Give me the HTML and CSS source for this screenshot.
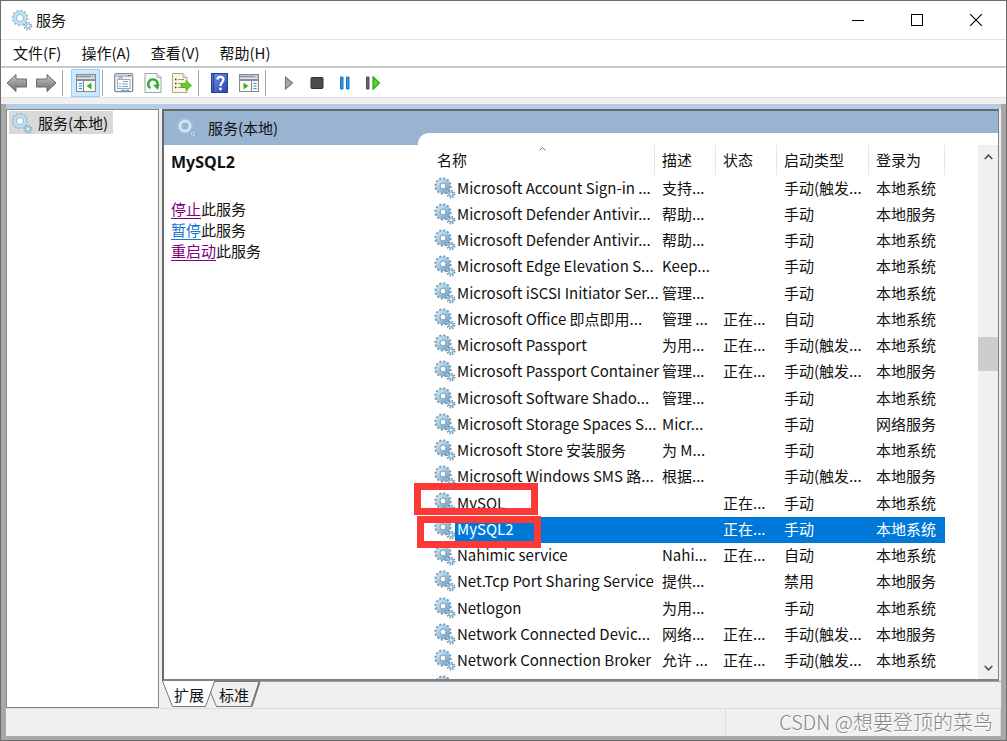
FILE: index.html
```html
<!DOCTYPE html>
<html lang="zh-CN">
<head>
<meta charset="utf-8">
<title>服务</title>
<link rel="stylesheet" href="styles.css">
</head>
<body>
<svg class="defs" aria-hidden="true">
  <defs>
    <linearGradient id="metal" x1="0" y1="0" x2="0" y2="1"><stop offset="0" stop-color="#c4c4c4"/><stop offset="1" stop-color="#6e6e6e"/></linearGradient>
    <linearGradient id="ring" x1="0" y1="0" x2="1" y2="1"><stop offset="0" stop-color="#c5e6f6"/><stop offset="1" stop-color="#74a3c8"/></linearGradient>
    <linearGradient id="book" x1="0" y1="0" x2="1" y2="1"><stop offset="0" stop-color="#6f92e4"/><stop offset="1" stop-color="#2446b4"/></linearGradient>
  </defs>
  <symbol id="gear" viewBox="0 0 22 22">
    <circle cx="9" cy="9" r="7.4" fill="none" stroke="#7795ae" stroke-width="2.4" stroke-dasharray="2.1 1.77"/>
    <circle cx="9" cy="9" r="5" fill="none" stroke="#86adc9" stroke-width="4.4"/>
    <circle cx="9" cy="9" r="5" fill="none" stroke="url(#ring)" stroke-width="3.4"/>
    <circle cx="9" cy="9" r="2.9" fill="#fff" stroke="#6f8ca5" stroke-width=".8"/>
    <circle cx="17" cy="17" r="3.4" fill="none" stroke="#6f8ea9" stroke-width="2" stroke-dasharray="1.4 1.27"/>
    <circle cx="17" cy="17" r="2" fill="#e8f4fa" stroke="#8db7d2" stroke-width="1.6"/>
  </symbol>
  <symbol id="gear-soft" viewBox="0 0 22 22">
    <circle cx="9" cy="9" r="7.4" fill="none" stroke="#9dc4e0" stroke-width="2" stroke-dasharray="2.1 1.77"/>
    <circle cx="9" cy="9" r="5" fill="none" stroke="#86b2d0" stroke-width="4.2"/>
    <circle cx="9" cy="9" r="5.2" fill="none" stroke="#bfe0f1" stroke-width="3"/>
    <circle cx="9" cy="9" r="3.4" fill="#fff" stroke="#8ba8bd" stroke-width=".6"/>
    <circle cx="17" cy="17" r="3.4" fill="none" stroke="#7fa5c0" stroke-width="2" stroke-dasharray="1.4 1.27"/>
    <circle cx="17" cy="17" r="2" fill="#e8f4fa" stroke="#a3cbe2" stroke-width="1.6"/>
  </symbol>
  <symbol id="gear-banner" viewBox="0 0 22 22">
    <circle cx="9" cy="9" r="7" fill="none" stroke="#a9c8e0" stroke-width="1.6" stroke-dasharray="2 1.66"/>
    <circle cx="9" cy="9" r="5" fill="#99b4d1" stroke="#c9e6f3" stroke-width="3"/>
    <circle cx="17" cy="17" r="3.2" fill="none" stroke="#86a9c6" stroke-width="1.8" stroke-dasharray="1.4 1.11"/>
    <circle cx="17" cy="17" r="1.8" fill="#99b4d1" stroke="#b4d2e6" stroke-width="1.2"/>
  </symbol>
</svg>

<div class="window">
  <header class="titlebar">
    <svg class="gear-icon"><use href="#gear-soft"/></svg>
    <h1 class="title">服务</h1>
    <button class="caption" aria-label="最小化"><svg width="12" height="12"><path d="M0 6.5H12" stroke="#000"/></svg></button>
    <button class="caption" aria-label="最大化"><svg width="12" height="12"><rect x=".5" y=".5" width="11" height="11" fill="none" stroke="#000"/></svg></button>
    <button class="caption" aria-label="关闭"><svg width="12" height="12"><path d="M0 0L12 12M12 0L0 12" stroke="#000" stroke-width="1.1"/></svg></button>
  </header>
  <nav class="menubar">
    <button>文件(F)</button><button>操作(A)</button><button>查看(V)</button><button>帮助(H)</button>
  </nav>
  <div class="toolbar" role="toolbar">
    <button class="tool" aria-label="后退"><svg width="22" height="20" viewBox="0 0 22 20"><path d="M1 10L10 1.5V6H20.500V14H10V18.500Z" fill="url(#metal)" stroke="#6c6c6c"/></svg></button>
    <button class="tool" aria-label="前进"><svg width="22" height="20" viewBox="0 0 22 20"><path d="M21 10L12 1.500V6H1.500V14H12V18.500Z" fill="url(#metal)" stroke="#6c6c6c"/></svg></button>
    <span class="divider divider-first"></span>
    <button class="tool tool-on" aria-label="显示/隐藏控制台树"><svg width="20" height="18" viewBox="0 0 20 18"><rect x=".5" y=".5" width="19" height="17" fill="#f5f5f5" stroke="#848b93"/><path d="M1 2.500H19M1 6H19" stroke="#87919c" stroke-width="2"/><path d="M1 4.300H19" stroke="#dbe0e6"/><path d="M15 2.500H18" stroke="#fff" stroke-dasharray="1 1"/><path d="M7.500 7V17" stroke="#848b93"/><path d="M3 9.500H6M3 12H6M3 14.500H6" stroke="#3a8cd6" stroke-width="1.200"/><rect x="9.500" y="8" width="8" height="9" fill="#fff"/><path d="M15.500 8.500V15.500L10.500 12Z" fill="#3ab51a"/></svg></button>
    <span class="divider divider-tight"></span>
    <button class="tool" aria-label="属性"><svg width="20" height="20" viewBox="0 0 20 20"><rect x=".7" y=".7" width="18" height="18" rx="1.500" fill="#f4f6f8" stroke="#858b92" stroke-width="1.300"/><path d="M1 3H19" stroke="#b8c0c8" stroke-width="2"/><path d="M14 2.500H18" stroke="#555" stroke-dasharray="1 1"/><rect x="3.500" y="6.500" width="12.500" height="9" fill="#fff" stroke="#9ba9bb"/><path d="M5 6.500V4.500H8V6.500M9 8.500H14M8 11H14M8 13.500H14" fill="none" stroke="#8b9cb0"/><path d="M5 11H7M5 13.500H7" stroke="#57acd9"/><path d="M7.500 17.500H11M12 17.500H15" stroke="#35b4e6" stroke-width="1.500"/></svg></button>
    <button class="tool" aria-label="刷新"><svg width="18" height="20" viewBox="0 0 18 20"><path d="M1 .500H13L17 4.500V19.500H1Z" fill="#fafafa" stroke="#9fa3a7"/><path d="M13 .500V4.500H17" fill="#e2e2e2" stroke="#aaa"/><path d="M6.500 15A4.600 4.600 0 1 1 13.400 12" fill="none" stroke="#31ac35" stroke-width="2.400"/><path d="M9 12L15.500 11L14 17Z" fill="#31ac35"/></svg></button>
    <button class="tool" aria-label="导出列表"><svg width="20" height="20" viewBox="0 0 20 20"><path d="M.5.500H11L15 4.500V19.500H.5Z" fill="#fdf6dd" stroke="#a8a596"/><path d="M11 .500V4.500H15" fill="#eee6c8" stroke="#b5b09c"/><path d="M3 6.500H4.500M3 10.500H4.500M3 14.500H4.500" stroke="#333" stroke-width="1.500"/><path d="M6 6.500H12M6 10.500H10M6 14.500H12" stroke="#9690ae"/><path d="M9 10.500H14V7.500L19.500 12.500L14 17.500V14.500H9Z" fill="#67ca2b" stroke="#4aad1a" stroke-width=".8"/></svg></button>
    <span class="divider divider-tight"></span>
    <button class="tool" aria-label="帮助"><svg width="17" height="20" viewBox="0 0 17 20"><rect x=".5" y=".5" width="16" height="19" fill="url(#book)" stroke="#2b3f8f"/><path d="M2.500 1V19" stroke="#284a9e" stroke-width="1.500"/><path d="M6.500 6.500C6.500 3 12.500 3 12.500 6.500C12.500 9.500 9.500 9 9.500 13" fill="none" stroke="#fff" stroke-width="2.200"/><circle cx="9.500" cy="16" r="1.400" fill="#fff"/></svg></button>
    <button class="tool" aria-label="显示/隐藏操作窗格"><svg width="20" height="18" viewBox="0 0 20 18"><rect x=".5" y=".5" width="19" height="17" fill="#f5f5f5" stroke="#848b93"/><path d="M1 2.500H19M1 6H19" stroke="#87919c" stroke-width="2"/><path d="M1 4.300H19" stroke="#dbe0e6"/><path d="M15 2.500H18" stroke="#fff" stroke-dasharray="1 1"/><path d="M12.500 7V17" stroke="#848b93"/><path d="M14.500 9.500H17.500M14.500 12H17.500M14.500 14.500H17.500" stroke="#3a8cd6" stroke-width="1.200"/><rect x="2" y="8" width="9" height="9" fill="#fff"/><path d="M4.500 8.500V15.500L9.500 12Z" fill="#3ab51a"/></svg></button>
    <span class="divider divider-wide"></span>
    <button class="tool tool-run" aria-label="启动服务"><svg width="14" height="14" viewBox="0 0 14 14"><path d="M3.500 1V13L10.500 7Z" fill="#aaa" stroke="#7c7c7c" stroke-width="1.200"/></svg></button>
    <button class="tool tool-run" aria-label="停止服务"><svg width="14" height="14" viewBox="0 0 14 14"><rect x="1" y="1.500" width="12" height="11" rx="1" fill="#4b4b4b" stroke="#333"/></svg></button>
    <button class="tool tool-run" aria-label="暂停服务"><svg width="14" height="14" viewBox="0 0 14 14"><path d="M2.500 1H5V13H2.500ZM8.500 1H11V13H8.500Z" fill="#2f9be8" stroke="#1976bf"/></svg></button>
    <button class="tool tool-run" aria-label="重启动服务"><svg width="16" height="14" viewBox="0 0 16 14"><path d="M1.500 1H4V13H1.500Z" fill="#666" stroke="#4d4d4d"/><path d="M8 .700V13.300L14.500 7Z" fill="#4fd62a" stroke="#2ea316" stroke-width="1.200"/></svg></button>
  </div>
  <div class="spacer"></div>

  <main class="workspace">
    <div class="strip"></div>
    <div class="panes">
      <aside class="tree">
        <button class="tree-item"><svg class="gear-icon"><use href="#gear-soft"/></svg><span>服务(本地)</span></button>
      </aside>
      <section class="console">
        <div class="frame">
          <div class="banner"><svg class="gear-icon"><use href="#gear-banner"/></svg><span>服务(本地)</span></div>
          <div class="content">
            <div class="details">
              <h2>MySQL2</h2>
              <p><a class="visited" href="#stop">停止</a>此服务</p>
              <p><a href="#pause">暂停</a>此服务</p>
              <p><a class="visited" href="#restart">重启动</a>此服务</p>
            </div>
            <div class="list">
              <svg class="curve" width="16" height="12"><path d="M4 12V9Q6 1 14 0H16V12Z" fill="#fff"/></svg>
              <div class="table-wrap">
                <table>
                  <colgroup><col class="c-name"><col class="c-desc"><col class="c-state"><col class="c-start"><col class="c-logon"></colgroup>
                  <thead><tr><th>名称<svg class="sort" width="7" height="4"><path d="M.5 3.500L3.500.500L6.500 3.500" fill="none" stroke="#777"/></svg></th><th>描述</th><th>状态</th><th>启动类型</th><th>登录为</th></tr></thead>
                  <tbody>
                    <tr><td><svg class="gear-icon"><use href="#gear"/></svg>Microsoft Account Sign-in ...</td><td>支持...</td><td></td><td>手动(触发...</td><td>本地系统</td></tr>
                    <tr><td><svg class="gear-icon"><use href="#gear"/></svg>Microsoft Defender Antivir...</td><td>帮助...</td><td></td><td>手动</td><td>本地服务</td></tr>
                    <tr><td><svg class="gear-icon"><use href="#gear"/></svg>Microsoft Defender Antivir...</td><td>帮助...</td><td></td><td>手动</td><td>本地系统</td></tr>
                    <tr><td><svg class="gear-icon"><use href="#gear"/></svg>Microsoft Edge Elevation S...</td><td>Keep...</td><td></td><td>手动</td><td>本地系统</td></tr>
                    <tr><td><svg class="gear-icon"><use href="#gear"/></svg>Microsoft iSCSI Initiator Ser...</td><td>管理...</td><td></td><td>手动</td><td>本地系统</td></tr>
                    <tr><td><svg class="gear-icon"><use href="#gear"/></svg>Microsoft Office 即点即用...</td><td>管理 ...</td><td>正在...</td><td>自动</td><td>本地系统</td></tr>
                    <tr><td><svg class="gear-icon"><use href="#gear"/></svg>Microsoft Passport</td><td>为用...</td><td>正在...</td><td>手动(触发...</td><td>本地系统</td></tr>
                    <tr><td><svg class="gear-icon"><use href="#gear"/></svg>Microsoft Passport Container</td><td>管理...</td><td>正在...</td><td>手动(触发...</td><td>本地服务</td></tr>
                    <tr><td><svg class="gear-icon"><use href="#gear"/></svg>Microsoft Software Shado...</td><td>管理...</td><td></td><td>手动</td><td>本地系统</td></tr>
                    <tr><td><svg class="gear-icon"><use href="#gear"/></svg>Microsoft Storage Spaces S...</td><td>Micr...</td><td></td><td>手动</td><td>网络服务</td></tr>
                    <tr><td><svg class="gear-icon"><use href="#gear"/></svg>Microsoft Store 安装服务</td><td>为 M...</td><td></td><td>手动</td><td>本地系统</td></tr>
                    <tr><td><svg class="gear-icon"><use href="#gear"/></svg>Microsoft Windows SMS 路...</td><td>根据...</td><td></td><td>手动(触发...</td><td>本地服务</td></tr>
                    <tr><td><svg class="gear-icon"><use href="#gear"/></svg>MySQL<span class="mark mark-first"></span></td><td></td><td>正在...</td><td>手动</td><td>本地系统</td></tr>
                    <tr class="selected"><td><svg class="gear-icon"><use href="#gear"/></svg>MySQL2<span class="mark mark-second"></span></td><td></td><td>正在...</td><td>手动</td><td>本地系统</td></tr>
                    <tr><td><svg class="gear-icon"><use href="#gear"/></svg>Nahimic service</td><td>Nahi...</td><td>正在...</td><td>自动</td><td>本地系统</td></tr>
                    <tr><td><svg class="gear-icon"><use href="#gear"/></svg>Net.Tcp Port Sharing Service</td><td>提供...</td><td></td><td>禁用</td><td>本地服务</td></tr>
                    <tr><td><svg class="gear-icon"><use href="#gear"/></svg>Netlogon</td><td>为用...</td><td></td><td>手动</td><td>本地系统</td></tr>
                    <tr><td><svg class="gear-icon"><use href="#gear"/></svg>Network Connected Devic...</td><td>网络...</td><td>正在...</td><td>手动(触发...</td><td>本地服务</td></tr>
                    <tr><td><svg class="gear-icon"><use href="#gear"/></svg>Network Connection Broker</td><td>允许 ...</td><td>正在...</td><td>手动(触发...</td><td>本地系统</td></tr>
                    <tr><td><svg class="gear-icon"><use href="#gear"/></svg></td><td></td><td></td><td></td><td></td></tr>
                  </tbody>
                </table>
              </div>
              <div class="scrollbar">
                <button aria-label="向上滚动"><svg width="9" height="6"><path d="M.7 5L4.500 1.200L8.300 5" fill="none" stroke="#505050" stroke-width="1.600"/></svg></button>
                <div class="track"><div class="thumb"></div></div>
                <button aria-label="向下滚动"><svg width="9" height="6"><path d="M.7 1L4.500 4.800L8.300 1" fill="none" stroke="#505050" stroke-width="1.600"/></svg></button>
              </div>
            </div>
          </div>
        </div>
        <div class="tabs">
          <svg class="tab-shapes" width="100" height="27"><path d="M52.500 .500H97.500L89.500 25.500H54.500L48 10Z" fill="#f0f0f0" stroke="#777"/><path d="M97.500 1L89.500 25.500" stroke="#777" stroke-width="2"/><path d="M.500 0L10.500 25.500H43.500L52.500 0Z" fill="#fff"/><path d="M.500 0L10.500 25.500H43.500L52.500 .500" fill="none" stroke="#777"/></svg>
          <button>扩展</button><button>标准</button>
        </div>
      </section>
    </div>
    <footer class="statusbar"><span class="cell"></span><span class="cell cell-end"></span></footer>
  </main>
  <div class="watermark">CSDN @想要登顶的菜鸟</div>
</div>
</body>
</html>
```
FILE: styles.css
```css
* { box-sizing: border-box; }
body {
  margin: 0;
  font: 15px/20px "Noto Sans CJK SC", sans-serif;
  color: #111;
}
button {
  font: inherit;
  color: inherit;
  background: none;
  border: 0;
  padding: 0;
}
svg { flex: none; }
.defs { position: absolute; width: 0; height: 0; }
.gear-icon { width: 22px; height: 22px; }

.window {
  position: relative;
  display: flex;
  flex-direction: column;
  height: 100vh;
  border: 1px solid #6c6c6c;
  background: #fff;
  overflow: hidden;
}
.titlebar {
  display: flex;
  align-items: center;
  height: 39px;
  padding: 0 1px 1px 10px;
  border-bottom: 1px solid #e4e4e4;
}
.title {
  flex: 1;
  margin: 0 0 0 3px;
  font-size: 15px;
  font-weight: 400;
}
.caption {
  display: flex;
  align-items: center;
  justify-content: center;
  width: 59px;
  height: 36px;
}
.menubar {
  display: flex;
  align-items: center;
  gap: 20px;
  height: 28px;
  padding-left: 12px;
  border-bottom: 2px solid #c3c9cf;
}
.toolbar {
  display: flex;
  align-items: center;
  height: 30px;
  padding: 1px 0 0 1px;
  border-bottom: 1px solid #dedede;
}
.tool {
  display: flex;
  align-items: center;
  justify-content: center;
  width: 29px;
  height: 28px;
}
.tool-run { width: 28px; }
.tool-on {
  background: #cce8ff;
  border: 1px solid #99d1ff;
}
.divider {
  width: 1px;
  height: 26px;
  margin-left: 2px;
  background: #a8a8a8;
}
.divider-first { margin-right: 8px; }
.divider-tight { margin-right: 6px; }
.divider-wide { margin-right: 9px; }
.spacer { height: 6px; background: #f0f0f0; }

.workspace {
  display: flex;
  flex-direction: column;
  flex: 1;
  min-height: 0;
  border: solid #a8a8a8;
  border-width: 0 5px 4px;
  background: #f0f0f0;
}
.strip { height: 5px; background: #b5cde7; }
.panes {
  display: flex;
  flex: 1;
  gap: 3px;
  min-height: 0;
}
.tree {
  width: 153px;
  padding: 1px 2px;
  border: 1px solid #828790;
  background: #fff;
}
.tree-item {
  display: flex;
  align-items: center;
  gap: 5px;
  height: 23px;
  padding: 0 5px 0 2px;
  background: #d9d9d9;
}
.console {
  display: flex;
  flex: 1;
  flex-direction: column;
  min-width: 0;
}
.frame {
  display: flex;
  flex: 1;
  flex-direction: column;
  min-height: 0;
  margin-right: 2px;
  border: 2px solid;
  border-color: #696969 #808080 #808080 #696969;
  border-right-width: 1px;
  background: #fff;
}
.banner {
  display: flex;
  align-items: center;
  gap: 10px;
  height: 34px;
  padding-left: 12px;
  background: #99b4d1;
}
.content {
  display: flex;
  flex: 1;
  min-height: 0;
}
.details {
  width: 250px;
  padding: 6px 7px;
}
.details h2 {
  margin: 0 0 25px;
  font: 700 16px/22px "Noto Sans", sans-serif;
}
.details p {
  margin: 0;
  line-height: 21px;
}
.details a {
  color: #1a73d0;
  text-underline-offset: 3px;
}
.details a.visited { color: #800080; }
.list {
  position: relative;
  display: flex;
  flex: 1;
  min-width: 0;
}
/* White shoulder that lifts the list into the banner */
.list::before {
  content: "";
  position: absolute;
  top: -12px;
  left: 16px;
  right: 0;
  height: 12px;
  background: #fff;
}
.curve { position: absolute; top: -12px; left: 0; }
.table-wrap {
  flex: 1;
  min-width: 0;
  padding-left: 16px;
  overflow: hidden;
}
table {
  width: 515px;
  table-layout: fixed;
  border-collapse: separate;
  border-spacing: 0;
}
.c-name { width: 225px; }
.c-desc { width: 61px; }
.c-state { width: 61px; }
.c-start { width: 92px; }
.c-logon { width: 76px; }
th, td {
  padding: 0 0 0 7px;
  text-align: left;
  font-weight: 400;
  white-space: nowrap;
}
th {
  position: relative;
  height: 30px;
  border-right: 1px solid #e5e5e5;
}
td {
  height: 26px;
  padding-bottom: 2px;
  line-height: 22px;
}
tbody tr:nth-child(4n+1) td { height: 27px; }
td:first-child {
  position: relative;
  padding-left: 4px;
}
td .gear-icon {
  margin-right: 1px;
  vertical-align: top;
}
.sort { position: absolute; top: 2px; left: 109px; }
.selected { color: #fff; }
.selected td { background: #0078d7; }
.selected td:first-child { background: linear-gradient(to right, transparent 25px, #0078d7 25px); }
.mark {
  position: absolute;
  z-index: 1;
  height: 32px;
  width: 124px;
  border: 7px solid #fb3a38;
}
.mark-first { left: -16px; top: -7px; }
.mark-second { left: -13px; top: -1px; }
.scrollbar {
  display: flex;
  flex-direction: column;
  width: 20px;
  background: #f0f0f0;
}
.scrollbar button {
  display: flex;
  align-items: center;
  justify-content: center;
  height: 23px;
}
.track { flex: 1; padding-top: 169px; }
.thumb { height: 34px; background: #cdcdcd; }
.tabs {
  position: relative;
  display: flex;
  gap: 15px;
  height: 27px;
  padding-left: 12px;
  border-top: 1px solid #a0a0a0;
}
.tabs button { position: relative; height: 25px; }
.tab-shapes { position: absolute; left: 0; top: -1px; }
.statusbar {
  display: flex;
  height: 28px;
  border-top: 1px solid #dcdcdc;
}
.cell { flex: 1; border-right: 1px solid #dcdcdc; }
.cell-end { flex: 0 0 275px; }
.watermark {
  position: absolute;
  right: 13px;
  bottom: 4px;
  font-size: 20px;
  font-weight: 300;
  line-height: 28px;
  color: #858585;
  text-shadow: 1px 1px 0 #fff;
}
```
